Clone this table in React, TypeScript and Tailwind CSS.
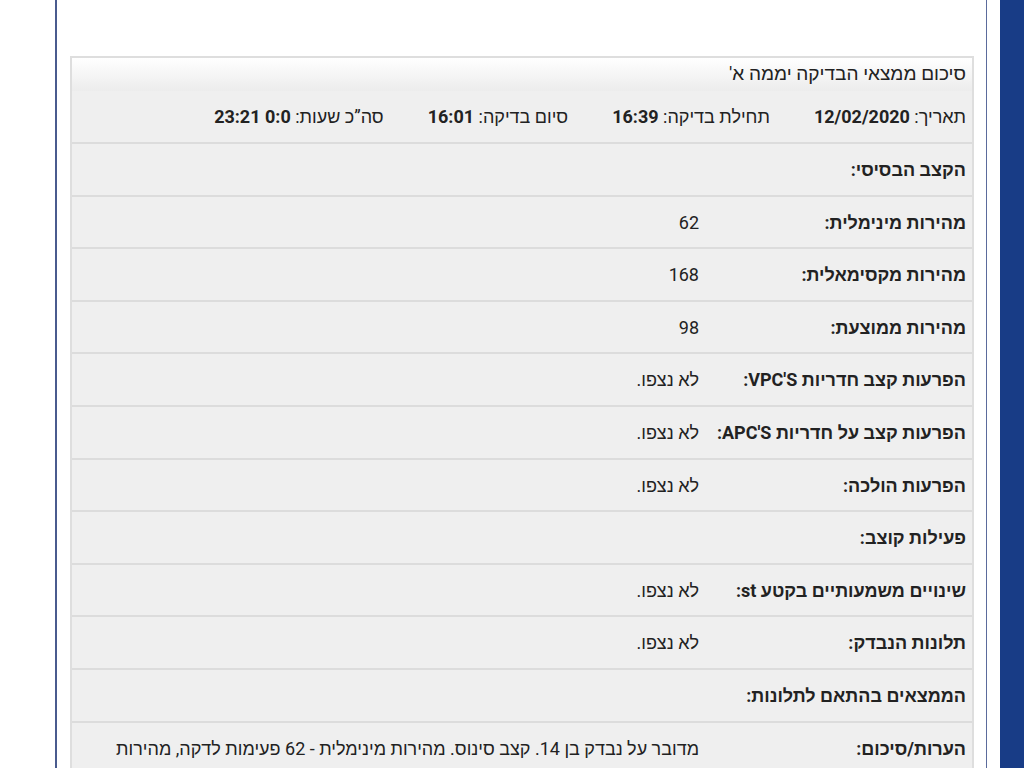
const rows: { label: string; value?: string }[] = [
  { label: "הקצב הבסיסי:" },
  { label: "מהירות מינימלית:", value: "62" },
  { label: "מהירות מקסימאלית:", value: "168" },
  { label: "מהירות ממוצעת:", value: "98" },
  { label: "הפרעות קצב חדריות VPC'S:", value: "לא נצפו." },
  { label: "הפרעות קצב על חדריות APC'S:", value: "לא נצפו." },
  { label: "הפרעות הולכה:", value: "לא נצפו." },
  { label: "פעילות קוצב:" },
  { label: "שינויים משמעותיים בקטע st:", value: "לא נצפו." },
  { label: "תלונות הנבדק:", value: "לא נצפו." },
  { label: "הממצאים בהתאם לתלונות:" },
  {
    label: "הערות/סיכום:",
    value:
      "מדובר על נבדק בן 14. קצב סינוס. מהירות מינימלית - 62 פעימות לדקה, מהירות מקסימאלית - 168 פעימות לדקה, מהירות ממוצעת - 98 פעימות לדקה.",
  },
];

const times = [
  { label: "תאריך:", value: "12/02/2020" },
  { label: "תחילת בדיקה:", value: "16:39" },
  { label: "סיום בדיקה:", value: "16:01" },
  { label: "סה”כ שעות:", value: "0:0 23:21" },
];

export default function App() {
  return (
    <div
      className="h-screen overflow-hidden bg-white flex text-[#222]"
      style={{ fontFamily: 'Roboto, "Liberation Sans", sans-serif' }}
    >
      <div className="w-[55px] shrink-0" />
      <div className="w-[2px] shrink-0 bg-[#4a5b8e]" />

      {/* תוכן */}
      <div className="flex-1 pt-[56px] pl-[13px] pr-[12px]">
        <div dir="rtl" className="border-2 border-[#dedede] bg-[#efefef]">
          <div className="h-[33px] flex items-center px-[6px] text-[19px] bg-gradient-to-b from-white to-[#ececec]">
            סיכום ממצאי הבדיקה יממה א'
          </div>

          <div className="h-[53px] flex items-center gap-[44px] px-[6px] text-[18px] border-b-2 border-[#dcdcdc]">
            {times.map((t) => (
              <span key={t.label}>
                {t.label} <b className="font-bold">{t.value}</b>
              </span>
            ))}
          </div>

          {rows.map((r, i) => (
            <div
              key={r.label}
              className="h-[52.6px] flex items-start border-b-2 border-[#dcdcdc] text-[18px]"
            >
              <div className="w-[267px] shrink-0 pt-[13px] pr-[6px] font-bold leading-[26px]">
                {r.label}
              </div>
              <div
                className={
                  i === rows.length - 1
                    ? "flex-1 pt-[9px] pr-[6px] pl-[40px] leading-[34px]"
                    : "flex-1 pt-[13px] pr-[6px] pl-[40px] leading-[26px]"
                }
              >
                {r.value}
              </div>
            </div>
          ))}
        </div>
      </div>

      <div className="w-[1px] shrink-0 bg-[#5b6b9c]" />
      <div className="w-[13px] shrink-0" />
      <div className="w-[24px] shrink-0 bg-[#183c86]" />
    </div>
  );
}
